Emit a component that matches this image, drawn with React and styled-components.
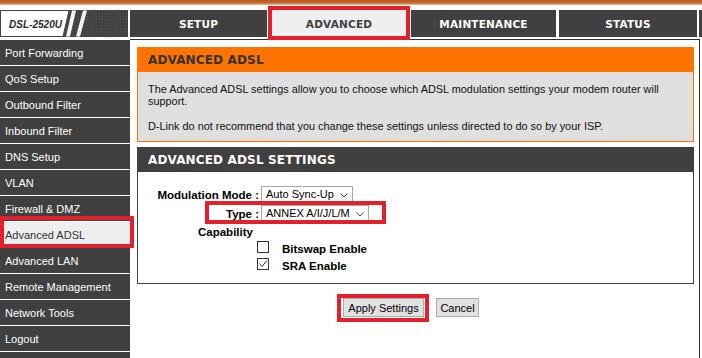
import React from "react";
import styled, { createGlobalStyle, css } from "styled-components";

const GlobalStyle = createGlobalStyle`
  html, body { margin: 0; padding: 0; background: #fff; }
  body { font-family: "Liberation Sans", Arial, sans-serif; font-size: 11px; color: #000; }
  * { box-sizing: border-box; }
`;

const RED = "#e2212b";

const redBox = css`
  &::after {
    content: "";
    position: absolute;
    border: 4px solid ${RED};
    pointer-events: none;
  }
`;

const Page = styled.div`
  width: 702px;
  height: 358px;
  overflow: hidden;
  display: flex;
  flex-direction: column;
`;

const TopStripe = styled.div`
  height: 5px;
  background: linear-gradient(to bottom, #b7571f 0%, #c9692e 60%, #f1c4a2 100%);
`;

const Header = styled.div`
  display: flex;
  height: 27px;
  margin-top: 5px;
`;

const Logo = styled.div`
  width: 128px;
  height: 27px;
  margin-right: 2px;
  flex: none;
  svg { display: block; }
`;

const Tabs = styled.div`
  display: flex;
  gap: 3px;
  flex: 1;
`;

const Tab = styled.div`
  position: relative;
  width: ${(p) => p.$w}px;
  flex: none;
  background: ${(p) => (p.$active ? "#eeeff0" : "#404040")};
  color: ${(p) => (p.$active ? "#404040" : "#ffffff")};
  font-family: "DejaVu Sans", Verdana, sans-serif;
  font-weight: bold;
  font-size: 10.5px;
  letter-spacing: 0.2px;
  display: flex;
  align-items: center;
  justify-content: center;
  ${(p) =>
    p.$active &&
    css`
      ${redBox}
      &::after { top: -4px; bottom: -3px; left: -2px; right: -2px; }
    `}
`;

const TabFiller = styled.div`
  flex: 1;
  margin-left: -1px;
  background: #404040;
`;

const Body = styled.div`
  display: flex;
  flex: 1;
  margin-top: 2px;
`;

const SideNav = styled.nav`
  width: 130px;
  flex: none;
  display: flex;
  flex-direction: column;
  padding-top: 1px;
`;

const NavItem = styled.div`
  position: relative;
  height: 26px;
  line-height: 27px;
  border-bottom: 1px solid #fff;
  padding-left: 5px;
  font-size: 11px;
  background: ${(p) => (p.$active ? "#eeeeee" : "#404040")};
  color: ${(p) => (p.$active ? "#333" : "#fff")};
  white-space: nowrap;
  ${(p) =>
    p.$active &&
    css`
      ${redBox}
      &::after { top: -6px; bottom: -1px; left: 0; right: -4px; }
    `}
`;

const NavFiller = styled.div`
  flex: 1;
  background: #404040;
`;

const Main = styled.main`
  flex: 1;
  border-top: 1px solid #333;
  border-right: 1px solid #333;
  padding: 7px 5px 0 7px;
  display: flex;
  flex-direction: column;
`;

const HelpCol = styled.div`
  width: 2px;
  flex: none;
`;

const Section = styled.section`
  border: 1px solid ${(p) => (p.$tone === "orange" ? "#ff7300" : "#404040")};
  margin-top: ${(p) => p.$mt || 0}px;
`;

const SectionHead = styled.h2`
  margin: 0;
  height: 24px;
  line-height: 25px;
  padding-left: 10px;
  font-family: "DejaVu Sans", Verdana, sans-serif;
  font-weight: bold;
  font-size: 12px;
  letter-spacing: 0.15px;
  background: ${(p) => (p.$tone === "orange" ? "#ff7300" : "#404040")};
  color: ${(p) => (p.$tone === "orange" ? "#333" : "#fff")};
`;

const InfoBody = styled.div`
  background: #dfdfdf;
  padding: 11px 10px 9px 10px;
  display: flex;
  flex-direction: column;
  gap: 13px;
`;

const Para = styled.p`
  margin: 0;
  font-size: 10.9px;
  line-height: 12px;
  color: #111;
`;

const FormBody = styled.div`
  background: #fff;
  padding: 14px 10px 9px 10px;
  display: flex;
  flex-direction: column;
`;

const FormRow = styled.div`
  position: relative;
  display: flex;
  align-items: center;
  gap: 2px;
  height: 17px;
  margin-top: ${(p) => p.$mt || 0}px;
  ${(p) =>
    p.$highlight &&
    css`
      ${redBox}
      &::after { top: -4px; bottom: -2px; left: 57px; width: 173px; }
    `}
`;

const Label = styled.label`
  width: 111px;
  text-align: right;
  font-weight: bold;
  font-size: 11.5px;
  white-space: nowrap;
`;

const SelectBox = styled.div`
  position: relative;
  width: ${(p) => p.$w}px;
  height: 17px;
  border: 1px solid #a8a8a8;
  background: #fff;
  font-size: 11px;
  line-height: 15px;
  padding-left: 4px;
  white-space: nowrap;
  svg { position: absolute; right: 4px; top: 6px; }
`;

const GroupTitle = styled.div`
  margin-top: 3px;
  height: 14px;
  line-height: 14px;
  padding-left: 50px;
  font-weight: bold;
  font-size: 11.5px;
`;

const CheckRow = styled.div`
  display: flex;
  align-items: center;
  height: 17px;
  margin-top: ${(p) => p.$mt || 0}px;
  padding-left: 109px;
  gap: 13px;
  font-weight: bold;
  font-size: 11.5px;
`;

const CheckBox = styled.span`
  width: 12px;
  height: 12px;
  margin-top: -3px;
  border: 1px solid #333;
  background: #fff;
  display: inline-flex;
  svg { display: block; }
`;

const CheckText = styled.span`
  line-height: 14px;
`;

const ButtonRow = styled.div`
  display: flex;
  justify-content: center;
  gap: 12px;
  margin-top: 14px;
  padding-right: 9px;
`;

const Button = styled.button`
  position: relative;
  width: ${(p) => p.$w}px;
  height: 19px;
  padding: 0;
  background: #e1e1e1;
  border: 1px solid #adadad;
  font-family: "Liberation Sans", Arial, sans-serif;
  font-size: 11px;
  color: #000;
  ${(p) =>
    p.$highlight &&
    css`
      ${redBox}
      &::after { top: -5px; bottom: -6px; left: -7px; right: -6px; }
    `}
`;

const Chevron = () => (
  <svg width="8" height="5" viewBox="0 0 8 5">
    <polyline points="0.5,0.5 4,4 7.5,0.5" fill="none" stroke="#444" strokeWidth="1" />
  </svg>
);

const LogoArt = () => (
  <svg width="128" height="27" viewBox="0 0 128 27">
    <defs>
      <pattern id="noise" width="3" height="3" patternUnits="userSpaceOnUse">
        <rect width="3" height="3" fill="#3d3d3d" />
        <rect x="0" y="0" width="1" height="1" fill="#5e5e5e" />
        <rect x="2" y="1" width="1" height="1" fill="#525252" />
        <rect x="1" y="2" width="1" height="1" fill="#4a4a4a" />
      </pattern>
    </defs>
    <rect width="128" height="27" fill="url(#noise)" />
    <polygon points="0.5,0.5 69,0.5 63,26.5 0.5,26.5" fill="#fff" stroke="#444" strokeWidth="1" />
    <polygon points="66,26.5 70,26.5 76,0.5 72,0.5" fill="#f4f4f4" />
    <polygon points="76,26.5 80,26.5 87,0.5 83,0.5" fill="#f4f4f4" />
    <text
      x="9"
      y="18"
      fontFamily="Liberation Sans, Arial, sans-serif"
      fontStyle="italic"
      fontWeight="bold"
      fontSize="10.5"
      fill="#2a2a2a"
      textLength="53"
      lengthAdjust="spacingAndGlyphs"
    >
      DSL-2520U
    </text>
  </svg>
);

const Check = () => (
  <svg width="10" height="10" viewBox="0 0 10 10">
    <polyline points="1.5,4.5 4,7.5 9,1.5" fill="none" stroke="#333" strokeWidth="1" />
  </svg>
);

const tabs = [
  { label: "SETUP", w: 137 },
  { label: "ADVANCED", w: 138, active: true },
  { label: "MAINTENANCE", w: 145 },
  { label: "STATUS", w: 138 },
];

const navItems = [
  "Port Forwarding",
  "QoS Setup",
  "Outbound Filter",
  "Inbound Filter",
  "DNS Setup",
  "VLAN",
  "Firewall & DMZ",
  "Advanced ADSL",
  "Advanced LAN",
  "Remote Management",
  "Network Tools",
  "Logout",
];

export default function App() {
  return (
    <>
      <GlobalStyle />
      <Page>
        <TopStripe />
        <Header>
          <Logo>
            <LogoArt />
          </Logo>
          <Tabs>
            {tabs.map((t) => (
              <Tab key={t.label} $w={t.w} $active={t.active}>
                {t.label}
              </Tab>
            ))}
            <TabFiller />
          </Tabs>
        </Header>
        <Body>
          <SideNav>
            {navItems.map((n) => (
              <NavItem key={n} $active={n === "Advanced ADSL"}>
                {n}
              </NavItem>
            ))}
            <NavFiller />
          </SideNav>
          <Main>
            <Section $tone="orange">
              <SectionHead $tone="orange">ADVANCED ADSL</SectionHead>
              <InfoBody>
                <Para>
                  The Advanced ADSL settings allow you to choose which ADSL modulation settings your modem router will
                  <br />
                  support.
                </Para>
                <Para>D-Link do not recommend that you change these settings unless directed to do so by your ISP.</Para>
              </InfoBody>
            </Section>
            <Section $tone="dark" $mt={5}>
              <SectionHead $tone="dark">ADVANCED ADSL SETTINGS</SectionHead>
              <FormBody>
                <FormRow>
                  <Label>Modulation Mode :</Label>
                  <SelectBox $w={92}>
                    Auto Sync-Up
                    <Chevron />
                  </SelectBox>
                </FormRow>
                <FormRow $mt={2} $highlight>
                  <Label>Type :</Label>
                  <SelectBox $w={108}>
                    ANNEX A/I/J/L/M
                    <Chevron />
                  </SelectBox>
                </FormRow>
                <GroupTitle>Capability</GroupTitle>
                <CheckRow $mt={1}>
                  <CheckBox />
                  <CheckText>Bitswap Enable</CheckText>
                </CheckRow>
                <CheckRow>
                  <CheckBox>
                    <Check />
                  </CheckBox>
                  <CheckText>SRA Enable</CheckText>
                </CheckRow>
              </FormBody>
            </Section>
            <ButtonRow>
              <Button $w={81} $highlight>
                Apply Settings
              </Button>
              <Button $w={43}>Cancel</Button>
            </ButtonRow>
          </Main>
          <HelpCol />
        </Body>
      </Page>
    </>
  );
}
